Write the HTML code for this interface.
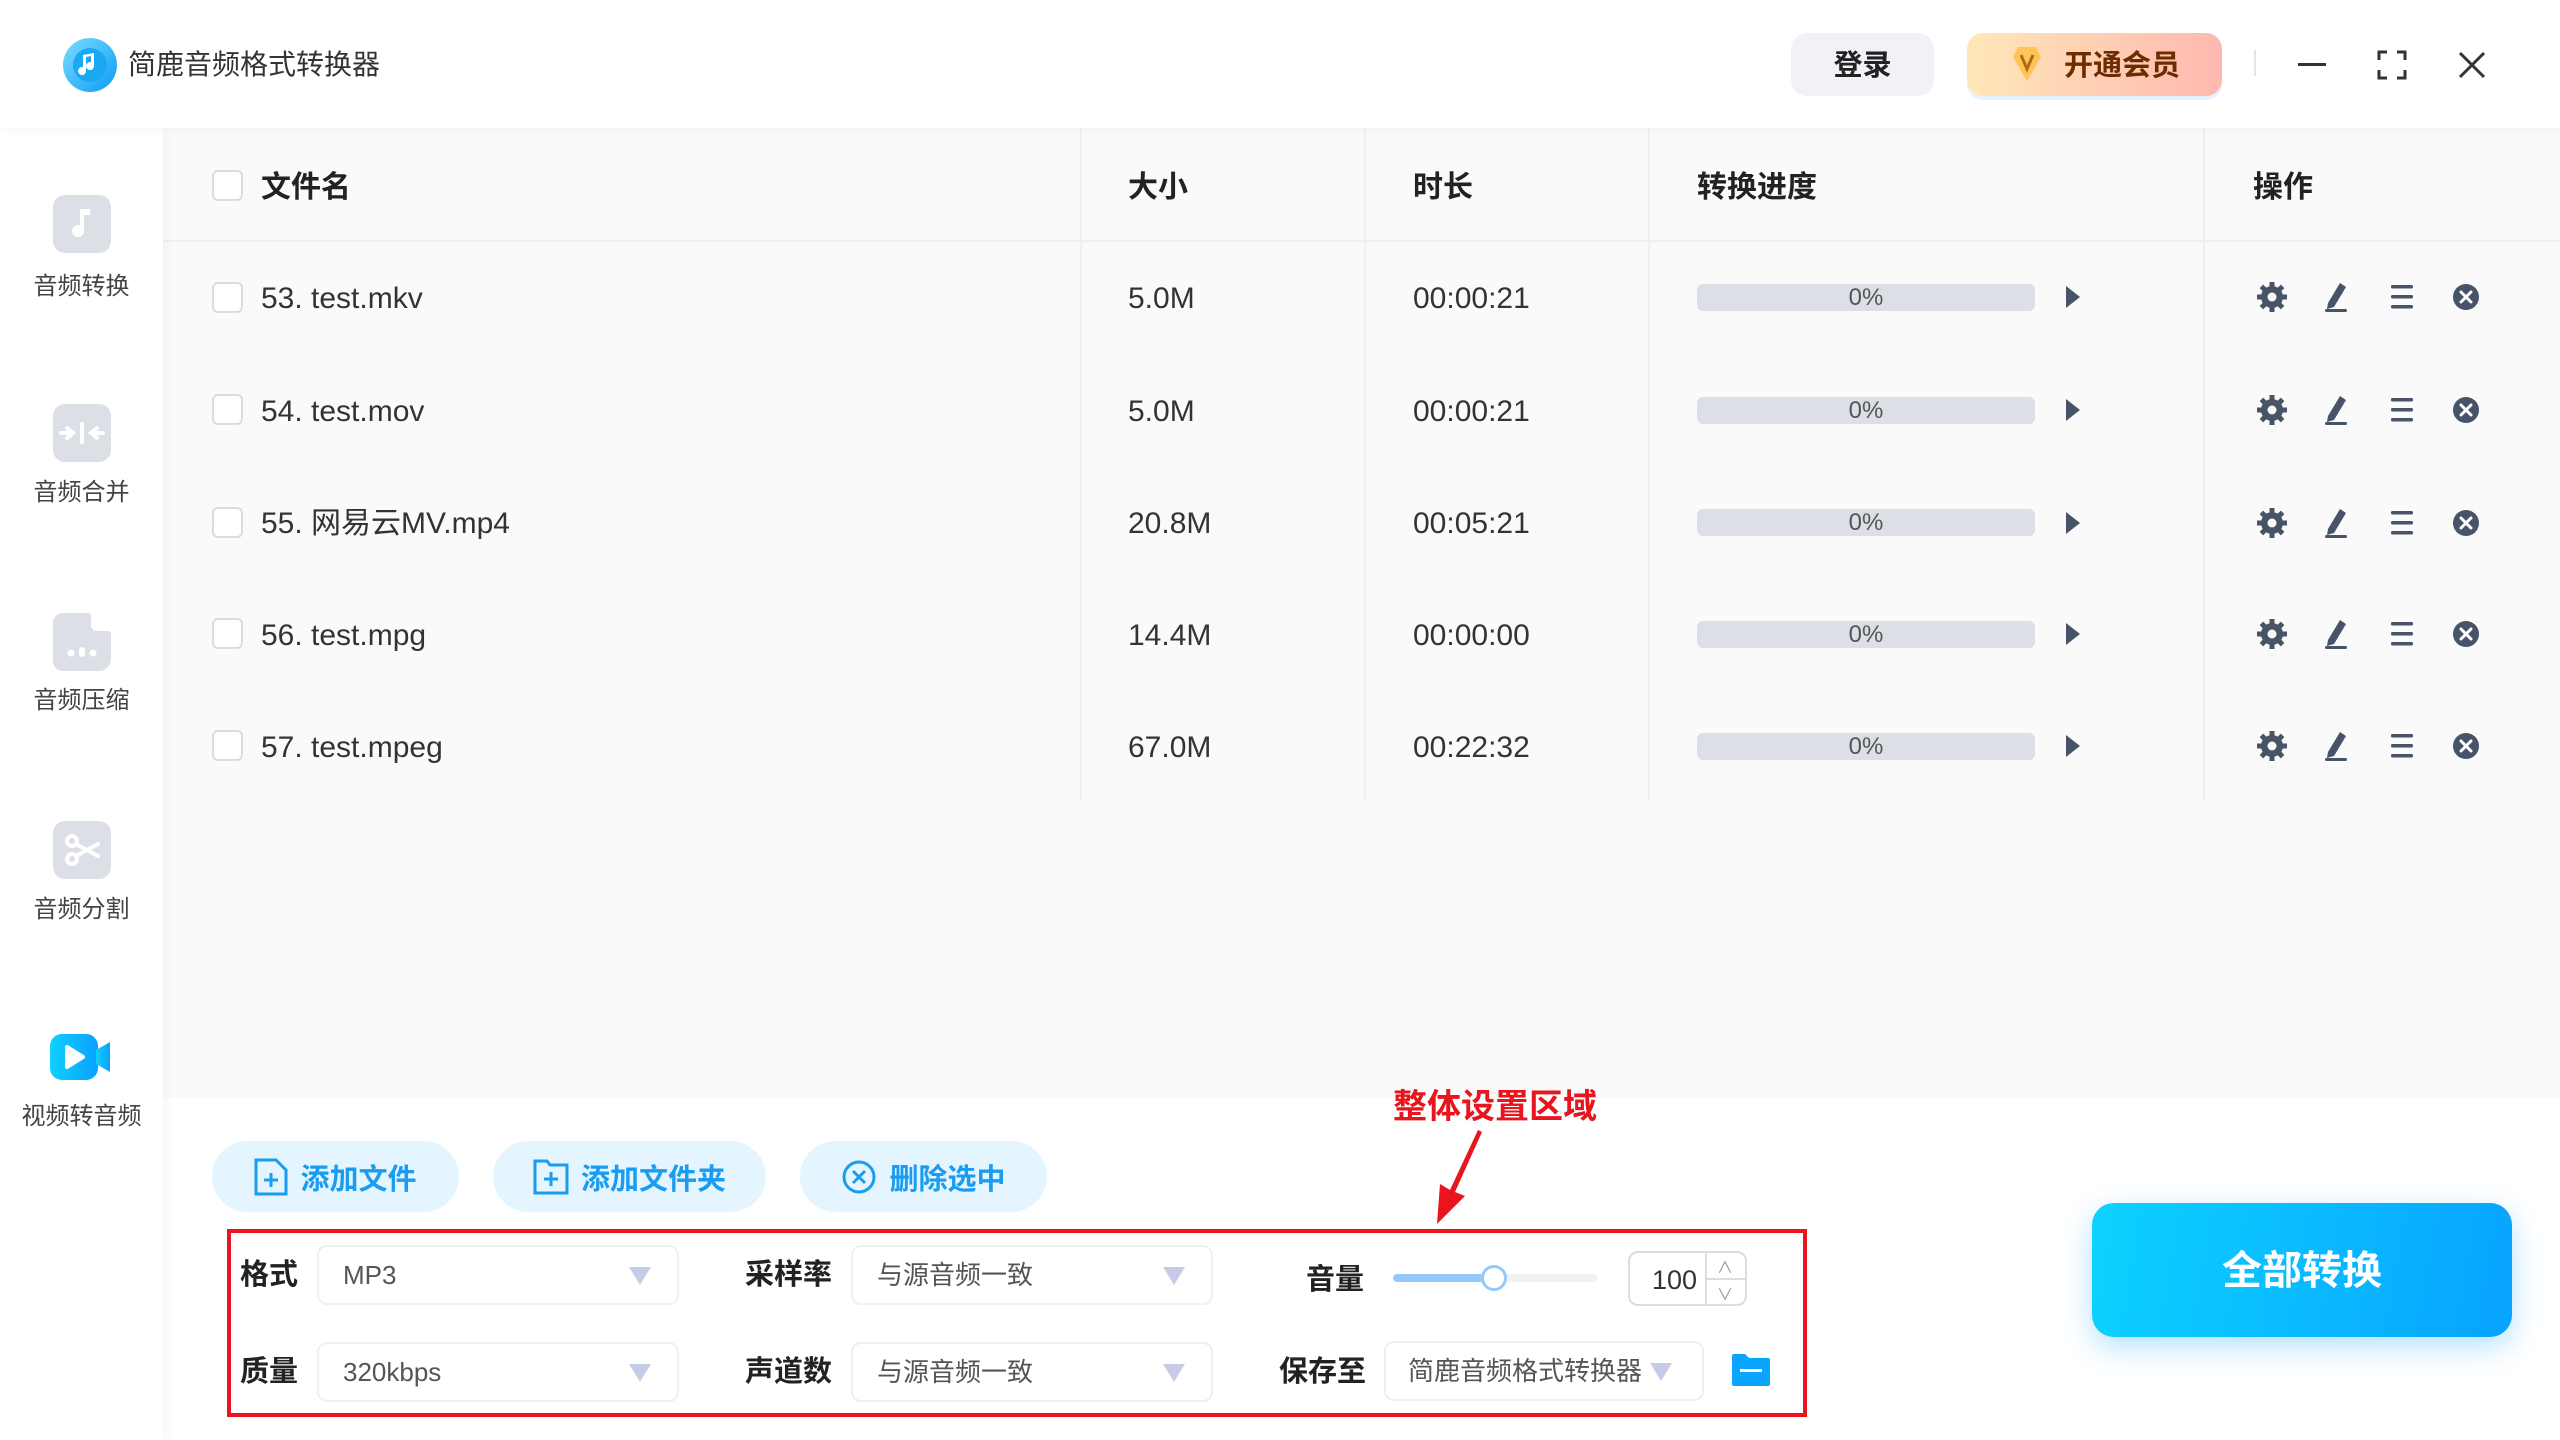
<!DOCTYPE html>
<html><head><meta charset="utf-8"><style>
*{margin:0;padding:0;box-sizing:border-box}
body{width:2560px;height:1440px;overflow:hidden;background:#fff;font-family:"Liberation Sans","Noto Sans CJK SC",sans-serif;color:#333;position:relative}
.a{position:absolute}
.hdr{left:0;top:0;width:2560px;height:128px;background:#fff;z-index:3;box-shadow:0 2px 10px rgba(0,0,0,.04)}
.side{left:0;top:128px;width:163px;height:1312px;background:#fff;box-shadow:3px 0 12px rgba(0,0,0,.04);z-index:2}
.main{left:163px;top:128px;width:2397px;height:970px;background:#fafafa}
.si{width:58px;height:58px;border-radius:12px;background:#dcdfe6;left:53px}
.sl{width:163px;left:0;text-align:center;font-size:24px;color:#444}
.th{font-size:30px;font-weight:bold;color:#222;top:162px}
.cb{width:31px;height:31px;border:2px solid #d8dce3;border-radius:6px;background:#fff;left:212px}
.td{font-size:30px;color:#333;line-height:40px}
.vl{width:2px;background:#eef0f3;top:128px;height:672px}
.pb{left:1697px;width:338px;height:27px;background:#dcdfe6;border-radius:6px;font-size:24px;color:#555;text-align:center;line-height:27px}
.btn{top:1141px;height:71px;background:#e4f5ff;border-radius:36px;color:#1a9cf0;font-weight:bold;font-size:29px;display:flex;align-items:center;justify-content:center;gap:12px}
.lb{font-size:29px;font-weight:bold;color:#222;line-height:40px}
.sel{height:60px;border:2px solid #eef0f4;border-radius:10px;background:#fff;font-size:26px;color:#555;line-height:56px;padding-left:24px}
.tri{position:absolute;right:26px;top:20px;width:0;height:0;border-left:11px solid transparent;border-right:11px solid transparent;border-top:18px solid #c8cbe6}
</style></head><body>
<div class="a hdr">
  <svg class="a" style="left:62px;top:37px" width="56" height="56" viewBox="0 0 56 56"><defs><linearGradient id="g" x1="0" y1="0" x2="1" y2="1"><stop offset="0" stop-color="#7fdcff"/><stop offset="1" stop-color="#0a9cf5"/></linearGradient></defs><circle cx="28" cy="28" r="27" fill="url(#g)"/><circle cx="28" cy="28" r="17" fill="#1aa8f5"/><path d="M24 20v14a4 4 0 1 1-3-3.8V18l11-2v13a4 4 0 1 1-3-3.8V19z" fill="#fff"/></svg>
  <div class="a" style="left:128px;top:47px;font-size:28px;color:#333;line-height:36px">简鹿音频格式转换器</div>
  <div class="a" style="left:1791px;top:33px;width:143px;height:63px;background:#f1f2f7;border-radius:16px;font-size:29px;font-weight:bold;text-align:center;line-height:66px;color:#222">登录</div>
  <div class="a" style="left:1967px;top:33px;width:255px;height:63px;background:linear-gradient(90deg,#ffe7b8,#ffb8b0);border-radius:16px;box-shadow:0 4px 0 #e6f2ff"></div>
  <svg class="a" style="left:2012px;top:45px" width="30" height="38" viewBox="0 0 30 38"><path d="M6 2h18l5 10-14 24L1 12z" fill="#ffc35a"/><path d="M9 10l6 14 6-14" stroke="#b06a10" stroke-width="3" fill="none"/></svg>
  <div class="a" style="left:2064px;top:46px;font-size:29px;font-weight:bold;color:#6b2d00;line-height:40px">开通会员</div>
  <div class="a" style="left:2254px;top:50px;width:2px;height:26px;background:#e5e5e5"></div>
  <div class="a" style="left:2298px;top:63px;width:28px;height:3px;background:#333"></div>
  <svg class="a" style="left:2377px;top:50px" width="30" height="30" viewBox="0 0 30 30" fill="none" stroke="#333" stroke-width="3"><path d="M2 10V2h8M20 2h8v8M28 20v8h-8M10 28H2v-8"/></svg>
  <svg class="a" style="left:2458px;top:51px" width="28" height="28" viewBox="0 0 28 28" stroke="#333" stroke-width="3"><path d="M2 2l24 24M26 2L2 26"/></svg>
</div>
<div class="a side">
  <div class="a si" style="top:67px"><svg width="58" height="58" viewBox="0 0 58 58"><path d="M31 14v22a6 6 0 1 1-4-5.6V14h10v6h-6z" fill="#fff"/></svg></div>
  <div class="a sl" style="top:138px">音频转换</div>
  <div class="a si" style="top:276px"><svg width="58" height="58" viewBox="0 0 58 58" stroke="#fff" stroke-width="4" stroke-linecap="round" fill="none"><path d="M29 20v18M8 29h12M14 24l6 5-6 5M50 29H38M44 24l-6 5 6 5"/></svg></div>
  <div class="a sl" style="top:344px">音频合并</div>
  <div class="a si" style="top:485px;background:none"><svg width="58" height="58" viewBox="0 0 58 58"><path d="M10 0h26l22 20v26a12 12 0 0 1-12 12H10A10 10 0 0 1 0 48V10A10 10 0 0 1 10 0z" fill="#dcdfe6"/><path d="M38 0l20 18H44a6 6 0 0 1-6-6z" fill="#fff"/><circle cx="18" cy="40" r="3.5" fill="#fff"/><rect x="26" y="34" width="6" height="10" rx="3" fill="#fff"/><circle cx="40" cy="40" r="3.5" fill="#fff"/></svg></div>
  <div class="a sl" style="top:552px">音频压缩</div>
  <div class="a si" style="top:693px"><svg width="58" height="58" viewBox="0 0 58 58" stroke="#fff" stroke-width="4" fill="none" stroke-linecap="round"><circle cx="19" cy="20" r="5"/><circle cx="19" cy="38" r="5"/><path d="M23 23l22 12M23 35l22-12"/></svg></div>
  <div class="a sl" style="top:761px">音频分割</div>
  <div class="a" style="left:50px;top:904px;width:64px;height:50px;"><svg width="64" height="50" viewBox="0 0 64 50"><defs><linearGradient id="v" x1="0" x2="1"><stop offset="0" stop-color="#10d0ff"/><stop offset="1" stop-color="#0aa0ff"/></linearGradient></defs><rect x="0" y="2" width="48" height="46" rx="12" fill="url(#v)"/><path d="M46 18l14-8v30l-14-8z" fill="url(#v)"/><path d="M17 15l16 10-16 10z" fill="#fff" stroke="#fff" stroke-width="4" stroke-linejoin="round"/></svg></div>
  <div class="a sl" style="top:968px">视频转音频</div>
</div>
<div class="a main"></div>
<div class="a" style="left:163px;top:240px;width:2397px;height:2px;background:#eef0f3"></div>
<div class="a vl" style="left:1080px"></div><div class="a vl" style="left:1364px"></div><div class="a vl" style="left:1648px"></div><div class="a vl" style="left:2203px"></div>
<div class="a cb" style="top:170px"></div>
<div class="a th" style="left:261px">文件名</div>
<div class="a th" style="left:1128px">大小</div>
<div class="a th" style="left:1413px">时长</div>
<div class="a th" style="left:1697px">转换进度</div>
<div class="a th" style="left:2253px">操作</div>

<div class="a cb" style="top:282px"></div><div class="a td" style="left:261px;top:279px">53. test.mkv</div><div class="a td" style="left:1128px;top:279px">5.0M</div><div class="a td" style="left:1413px;top:279px">00:00:21</div><div class="a pb" style="top:284px">0%</div>
<div class="a cb" style="top:394px"></div><div class="a td" style="left:261px;top:392px">54. test.mov</div><div class="a td" style="left:1128px;top:392px">5.0M</div><div class="a td" style="left:1413px;top:392px">00:00:21</div><div class="a pb" style="top:397px">0%</div>
<div class="a cb" style="top:507px"></div><div class="a td" style="left:261px;top:504px">55. 网易云MV.mp4</div><div class="a td" style="left:1128px;top:504px">20.8M</div><div class="a td" style="left:1413px;top:504px">00:05:21</div><div class="a pb" style="top:509px">0%</div>
<div class="a cb" style="top:618px"></div><div class="a td" style="left:261px;top:616px">56. test.mpg</div><div class="a td" style="left:1128px;top:616px">14.4M</div><div class="a td" style="left:1413px;top:616px">00:00:00</div><div class="a pb" style="top:621px">0%</div>
<div class="a cb" style="top:730px"></div><div class="a td" style="left:261px;top:728px">57. test.mpeg</div><div class="a td" style="left:1128px;top:728px">67.0M</div><div class="a td" style="left:1413px;top:728px">00:22:32</div><div class="a pb" style="top:733px">0%</div>

<svg class="a" style="left:0;top:0" width="2560" height="800">
<defs>
<g id="ops" fill="#475366">
 <path d="M2066-11v22l14-11z"/>
 <g transform="translate(2272,0)"><circle r="11"/><g stroke="#475366" stroke-width="5"><path d="M0-15v30M-15 0h30M-10.6-10.6l21.2 21.2M10.6-10.6l-21.2 21.2"/></g><circle r="4.5" fill="#fafafa"/></g>
 <path d="M2328 6l12-20 6 4-12 20-7 2z"/><rect x="2325" y="12" width="22" height="3" rx="1.5"/>
 <rect x="2391" y="-12" width="22" height="3.5" rx="1.5"/><rect x="2391" y="-2" width="22" height="3.5" rx="1.5"/><rect x="2391" y="8" width="22" height="3.5" rx="1.5"/>
 <g transform="translate(2466,0)"><circle r="13"/><path d="M-5-5l10 10M5-5l-10 10" stroke="#fff" stroke-width="3" stroke-linecap="round"/></g>
</g></defs>
<use href="#ops" y="297"/><use href="#ops" y="410"/><use href="#ops" y="523"/><use href="#ops" y="634"/><use href="#ops" y="746"/>
</svg>

<div class="a btn" style="left:212px;width:247px"><svg width="34" height="38" viewBox="0 0 34 38" fill="none" stroke="#1a9cf0" stroke-width="3"><path d="M2 2h20l10 10v24H2z"/><path d="M17 15v14M10 22h14"/></svg><span>添加文件</span></div>
<div class="a btn" style="left:493px;width:273px"><svg width="36" height="36" viewBox="0 0 36 36" fill="none" stroke="#1a9cf0" stroke-width="3"><path d="M2 2h12l3 4h17v28H2z"/><path d="M18 13v14M11 20h14"/></svg><span>添加文件夹</span></div>
<div class="a btn" style="left:800px;width:247px"><svg width="36" height="36" viewBox="0 0 36 36" fill="none" stroke="#1a9cf0" stroke-width="3"><circle cx="18" cy="18" r="15"/><path d="M12 12l12 12M24 12L12 24"/></svg><span>删除选中</span></div>

<div class="a" style="left:1393px;top:1087px;font-size:34px;font-weight:bold;color:#e8141e;line-height:40px">整体设置区域</div>
<svg class="a" style="left:1420px;top:1128px" width="70" height="100" viewBox="0 0 70 100"><path d="M58 2L30 62l-10-6L17 96l28-28-10-4L62 4z" fill="#e8141e"/></svg>

<div class="a" style="left:227px;top:1229px;width:1580px;height:188px;border:4px solid #e8141e"></div>
<div class="a lb" style="left:240px;top:1255px">格式</div>
<div class="a sel" style="left:317px;top:1245px;width:362px">MP3<i class="tri"></i></div>
<div class="a lb" style="left:745px;top:1255px">采样率</div>
<div class="a sel" style="left:851px;top:1245px;width:362px">与源音频一致<i class="tri"></i></div>
<div class="a lb" style="left:1306px;top:1260px">音量</div>
<div class="a" style="left:1393px;top:1274px;width:204px;height:8px;border-radius:4px;background:#f2f2f2"></div>
<div class="a" style="left:1393px;top:1274px;width:101px;height:8px;border-radius:4px;background:#93c9fb"></div>
<div class="a" style="left:1481px;top:1265px;width:26px;height:26px;border-radius:50%;background:#fff;border:3px solid #93c9fb"></div>
<div class="a" style="left:1628px;top:1251px;width:119px;height:55px;border:2px solid #dcdcdc;border-radius:10px;background:#fff"></div>
<div class="a" style="left:1705px;top:1252px;width:2px;height:53px;background:#dcdcdc"></div>
<div class="a" style="left:1706px;top:1278px;width:40px;height:2px;background:#dcdcdc"></div>
<div class="a" style="left:1652px;top:1260px;font-size:27px;color:#333;line-height:40px">100</div>
<div class="a" style="left:1717px;top:1254px;font-size:16px;color:#999">∧</div>
<div class="a" style="left:1717px;top:1281px;font-size:16px;color:#999">∨</div>

<div class="a lb" style="left:240px;top:1352px">质量</div>
<div class="a sel" style="left:317px;top:1342px;width:362px">320kbps<i class="tri"></i></div>
<div class="a lb" style="left:745px;top:1352px">声道数</div>
<div class="a sel" style="left:851px;top:1342px;width:362px">与源音频一致<i class="tri"></i></div>
<div class="a lb" style="left:1279px;top:1352px">保存至</div>
<div class="a sel" style="left:1384px;top:1341px;width:320px;padding-left:22px">简鹿音频格式转换器<i class="tri" style="right:30px"></i></div>
<svg class="a" style="left:1732px;top:1354px" width="38" height="32" viewBox="0 0 38 32"><path d="M0 2a2 2 0 0 1 2-2h11l4 4h19a2 2 0 0 1 2 2v24a2 2 0 0 1-2 2H2a2 2 0 0 1-2-2z" fill="#0aa5ff"/><rect x="8" y="15" width="22" height="3" fill="#fff"/></svg>

<div class="a" style="left:2092px;top:1203px;width:420px;height:134px;border-radius:22px;background:linear-gradient(100deg,#0dd2ff,#08a3ff);box-shadow:0 10px 30px rgba(10,160,255,.3);color:#fff;font-size:40px;font-weight:bold;text-align:center;line-height:136px">全部转换</div>
</body></html>
